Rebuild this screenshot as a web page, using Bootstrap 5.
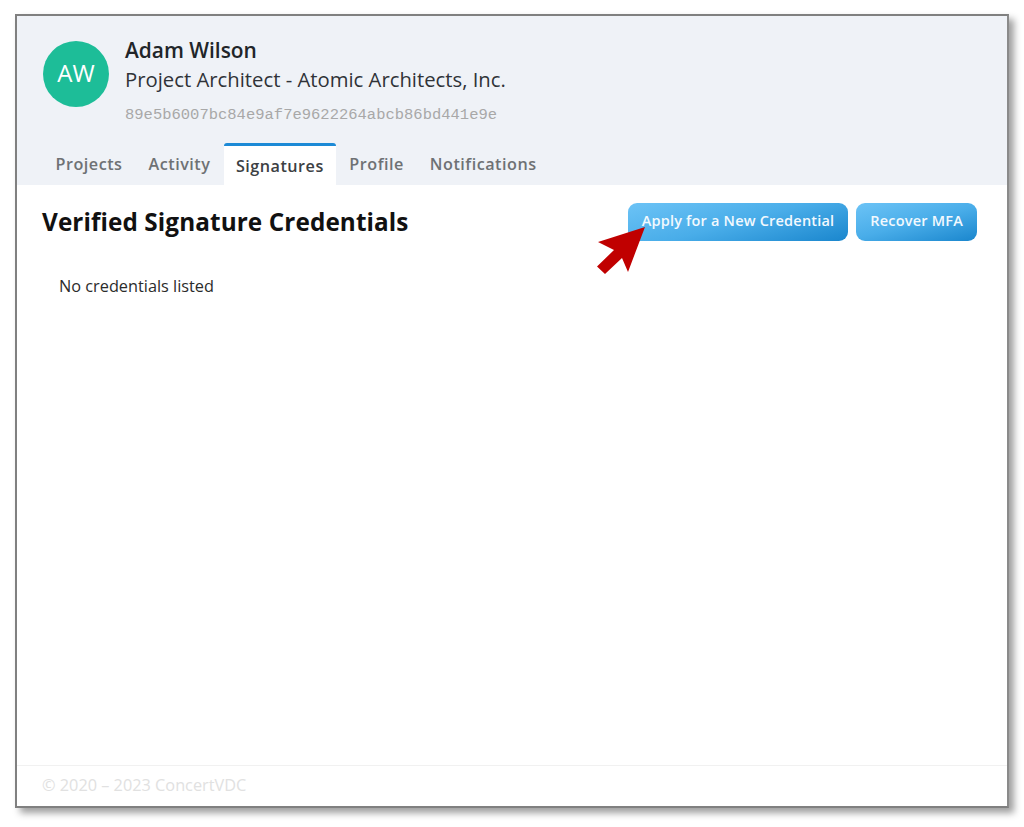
<!DOCTYPE html>
<html lang="en">
<head>
<meta charset="utf-8">
<title>Signatures</title>
<link href="https://cdn.jsdelivr.net/npm/bootstrap@5.3.0/dist/css/bootstrap.min.css" rel="stylesheet">
<style>
html, body { height: 100%; background: #fff; }
body { font-family: "Open Sans", sans-serif; color: #212529; padding: 14px 15px 19px 15px; overflow: hidden; }
.shot-frame { position: relative; height: 794px; border: 2px solid #808080; border-right-color: #8a8a8a; background: #fff; box-shadow: 5px 5px 7px rgba(0,0,0,.38); }
.prof-head { background: #eff2f7; padding: 22px 0 0 26px; height: 169px; }
.avatar-disc { width: 66px; height: 66px; margin-top: 3px; background: #1dbd98; color: #fff; font-size: 24px; line-height: 63px; text-align: center; border-radius: 50%; }
.prof-name { font-size: 20.9px; font-weight: 600; line-height: 25px; color: #212529; }
.prof-role { font-size: 20.3px; line-height: 29px; margin-top: 2px; color: #2f3338; }
.prof-hash { font-family: "Liberation Mono", monospace; font-size: 15.5px; line-height: 18px; margin-top: 12px; color: #a8a8a8; }
.tab-row { margin-top: 20px; gap: 1px; }
.tab-link { display: block; padding: 0 12.500px; height: 41px; line-height: 41px; font-size: 16.2px; font-weight: 600; letter-spacing: .5px; color: #6e7174; text-decoration: none; }
.tab-link.tab-on { line-height: 41px; background: #fff; color: #3c4043; border-top: 3px solid #1c8ad6; border-radius: 3px 3px 0 0; margin-top: -1px; height: 42px; padding: 0 12px; }
.sig-body { padding: 18px 30px 0 25px; }
.sig-title { font-size: 24.3px; font-weight: 700; line-height: 38px; color: #111; margin: 0; letter-spacing: .1px; }
.grad-btn { height: 38px; padding: 0 14px 2px; border: 0; border-radius: 9px; font-size: 14.5px; font-weight: 600; letter-spacing: .2px; color: #f2f9fe; background: linear-gradient(165deg, #6cc3f6 0%, #49ade9 50%, #1a86cd 100%); }
.grad-btn:hover { color: #f2f9fe; }
.none-note { font-size: 16.3px; line-height: 22px; margin: 34px 0 0 17px; color: #2b2b2b; }
.foot-line { position: absolute; left: 0; right: 0; bottom: 0; height: 41px; border-top: 1px solid #f1f1f1; padding-left: 25px; line-height: 38px; font-size: 16.3px; color: #e1e1e1; }
.red-arrow { position: absolute; left: 580px; top: 211px; width: 50px; height: 48px; }
</style>
</head>
<body>
<div class="shot-frame">
  <div class="prof-head d-flex flex-column">
    <div class="d-flex gap-3">
      <div class="avatar-disc flex-shrink-0">AW</div>
      <div>
        <div class="prof-name">Adam Wilson</div>
        <div class="prof-role">Project Architect - Atomic Architects, Inc.</div>
        <div class="prof-hash">89e5b6007bc84e9af7e9622264abcb86bd441e9e</div>
      </div>
    </div>
    <div class="d-flex tab-row">
      <a class="tab-link" href="#">Projects</a>
      <a class="tab-link" href="#">Activity</a>
      <a class="tab-link tab-on" href="#">Signatures</a>
      <a class="tab-link" href="#">Profile</a>
      <a class="tab-link" href="#">Notifications</a>
    </div>
  </div>
  <div class="sig-body">
    <div class="d-flex justify-content-between align-items-start">
      <h1 class="sig-title">Verified Signature Credentials</h1>
      <div class="d-flex gap-2">
        <button type="button" class="btn grad-btn">Apply for a New Credential</button>
        <button type="button" class="btn grad-btn">Recover MFA</button>
      </div>
    </div>
    <p class="none-note">No credentials listed</p>
  </div>
  <div class="foot-line">© 2020 – 2023 ConcertVDC</div>
  <svg class="red-arrow" viewBox="0 0 50 48" aria-hidden="true"><path fill="#c00000" d="M48 0 L1 15 L17 23 L0 39.500 L8 47 L25 31 L31 45 Z"/></svg>
</div>
<script src="https://cdn.jsdelivr.net/npm/bootstrap@5.3.0/dist/js/bootstrap.bundle.min.js"></script>
</body>
</html>
